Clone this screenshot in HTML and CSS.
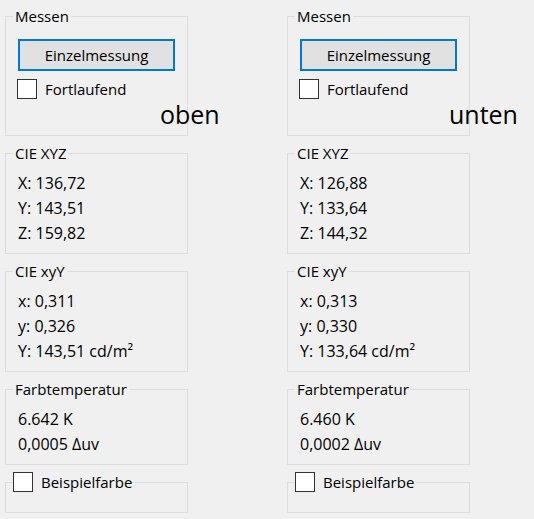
FILE: index.html
```html
<!DOCTYPE html>
<html lang="de">
<head>
<meta charset="utf-8">
<title>Messung</title>
<link rel="stylesheet" href="styles.css">
</head>
<body>
<div class="page">
  <div class="column">
    <span class="side-label side-left">oben</span>
    <fieldset class="group group-measure">
      <legend class="legend">Messen</legend>
      <div class="content">
        <button class="btn" type="button">Einzelmessung</button>
        <label class="check-row"><span class="check"></span><span>Fortlaufend</span></label>
      </div>
    </fieldset>
    <fieldset class="group">
      <legend class="legend">CIE XYZ</legend>
      <div class="content rows">
        <div class="row">X: 136,72</div>
        <div class="row">Y: 143,51</div>
        <div class="row">Z: 159,82</div>
      </div>
    </fieldset>
    <fieldset class="group">
      <legend class="legend">CIE xyY</legend>
      <div class="content rows">
        <div class="row">x: 0,311</div>
        <div class="row">y: 0,326</div>
        <div class="row">Y: 143,51 cd/m²</div>
      </div>
    </fieldset>
    <fieldset class="group">
      <legend class="legend">Farbtemperatur</legend>
      <div class="content rows">
        <div class="row">6.642 K</div>
        <div class="row">0,0005 Δuv</div>
      </div>
    </fieldset>
    <fieldset class="group group-sample">
      <legend class="legend legend-check"><span class="check"></span><span>Beispielfarbe</span></legend>
    </fieldset>
  </div>

  <div class="column">
    <span class="side-label side-right">unten</span>
    <fieldset class="group group-measure">
      <legend class="legend">Messen</legend>
      <div class="content">
        <button class="btn" type="button">Einzelmessung</button>
        <label class="check-row"><span class="check"></span><span>Fortlaufend</span></label>
      </div>
    </fieldset>
    <fieldset class="group">
      <legend class="legend">CIE XYZ</legend>
      <div class="content rows">
        <div class="row">X: 126,88</div>
        <div class="row">Y: 133,64</div>
        <div class="row">Z: 144,32</div>
      </div>
    </fieldset>
    <fieldset class="group">
      <legend class="legend">CIE xyY</legend>
      <div class="content rows">
        <div class="row">x: 0,313</div>
        <div class="row">y: 0,330</div>
        <div class="row">Y: 133,64 cd/m²</div>
      </div>
    </fieldset>
    <fieldset class="group">
      <legend class="legend">Farbtemperatur</legend>
      <div class="content rows">
        <div class="row">6.460 K</div>
        <div class="row">0,0002 Δuv</div>
      </div>
    </fieldset>
    <fieldset class="group group-sample">
      <legend class="legend legend-check"><span class="check"></span><span>Beispielfarbe</span></legend>
    </fieldset>
  </div>
</div>
</body>
</html>
```

FILE: styles.css
```css
html, body {
  margin: 0;
  padding: 0;
  background: #f0f0f0;
}

body {
  font-family: "Open Sans", "Noto Sans", "Liberation Sans", sans-serif;
  font-size: 15px;
  color: #000;
}

.page {
  display: flex;
  gap: 99px;
  padding: 6px 0 0 5px;
}

.column {
  position: relative;
  width: 183px;
  display: flex;
  flex-direction: column;
  gap: 7px;
}

.group {
  margin: 0;
  padding: 0 0 7px 7px;
  border: 1px solid #dcdcdc;
  min-width: 0;
}

.legend {
  padding: 0 2px;
  line-height: 20px;
  height: 20px;
}

.legend-check {
  display: flex;
  align-items: center;
  gap: 8px;
  padding: 0 2px 0 0;
}

.content {
  padding-left: 5px;
}

.rows {
  padding-top: 8px;
}

.row {
  font-size: 16px;
  line-height: 25px;
  height: 25px;
  white-space: nowrap;
}

.group-measure {
  padding-bottom: 36px;
}

.group-measure .content {
  padding-top: 13px;
  display: flex;
  flex-direction: column;
  align-items: flex-start;
  gap: 8px;
}

.btn {
  width: 157px;
  height: 32px;
  margin: 0;
  padding: 0;
  background: #e1e1e1;
  border: 2px solid #0078d7;
  border-radius: 0;
  font-family: inherit;
  font-size: 15px;
  line-height: 28px;
  color: #000;
}

.check-row {
  display: flex;
  align-items: center;
  gap: 8px;
  height: 20px;
  line-height: 20px;
  margin-left: -1px;
}

.check {
  display: block;
  box-sizing: border-box;
  width: 20px;
  height: 20px;
  background: #fff;
  border: 1px solid #333;
  flex: none;
}

.group-sample {
  padding-bottom: 20px;
}

.side-label {
  position: absolute;
  top: 91px;
  font-size: 25px;
  line-height: 34px;
  color: #000;
}

.side-left {
  left: 155px;
}

.side-right {
  left: 162px;
}
```
